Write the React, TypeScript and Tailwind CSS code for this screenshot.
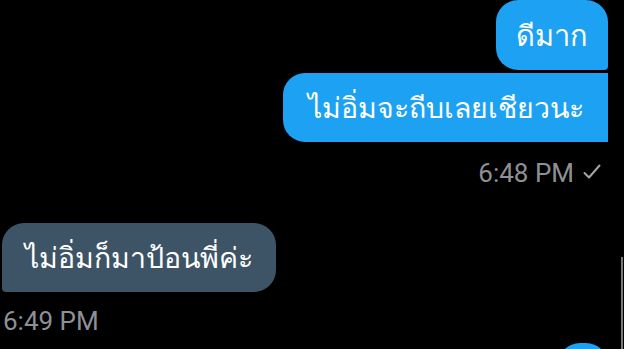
const Check = () => (
    <svg width="18" height="16" viewBox="0 0 18 16" fill="none" className="ml-[9px] -mt-[2px]">
        <path d="M1.5 9 L6 13.5 L16.5 1.5" stroke="#a3a5a8" strokeWidth="2" strokeLinecap="round" strokeLinejoin="round" />
    </svg>
)

const App = () => {
    return (
        <div className="relative w-[624px] h-[349px] overflow-hidden bg-black font-['Noto_Sans','DejaVu_Sans',sans-serif]">
            {/* outgoing */}
            <div className="flex flex-col items-end pr-[16px]">
                <div className="h-[70px] px-[20px] flex items-center whitespace-nowrap bg-[#1da1f2] text-white text-[29px] rounded-t-[22px] rounded-bl-[22px] rounded-br-[4px]">
                    ดีมาก
                </div>
                <div className="mt-[3px] h-[69px] w-[325px] px-[18px] flex items-center justify-center whitespace-nowrap bg-[#1da1f2] text-white text-[28.5px] rounded-l-[22px]">
                    ไม่อิ่มจะถีบเลยเชียวนะ
                </div>
                <div className="mt-[16px] flex items-center pr-[7px] text-[26px] leading-[30px] text-[#8e9094] font-['Roboto',sans-serif]">
                    6:48 PM
                    <Check />
                </div>
            </div>

            {/* incoming */}
            <div className="mt-[35px] pl-[2px] flex flex-col items-start">
                <div className="h-[69px] w-[274px] px-[18px] flex items-center justify-center whitespace-nowrap bg-[#3d5466] text-white text-[28.5px] rounded-tl-[22px] rounded-bl-[4px] rounded-r-[22px]">
                    ไม่อิ่มก็มาป้อนพี่ค่ะ
                </div>
                <div className="mt-[14px] pl-[1px] text-[26px] leading-[30px] text-[#8e9094] font-['Roboto',sans-serif]">
                    6:49 PM
                </div>
            </div>

            {/* next bubble peeking in */}
            <div className="absolute left-[558px] top-[343px] w-[50px] h-[40px] rounded-t-[22px] bg-[#1da1f2]" />
            {/* scrollbar */}
            <div className="absolute right-[1px] top-[257px] w-[2px] h-[92px] bg-[#7a7a7a]" />
        </div>
    )
}

export default App
